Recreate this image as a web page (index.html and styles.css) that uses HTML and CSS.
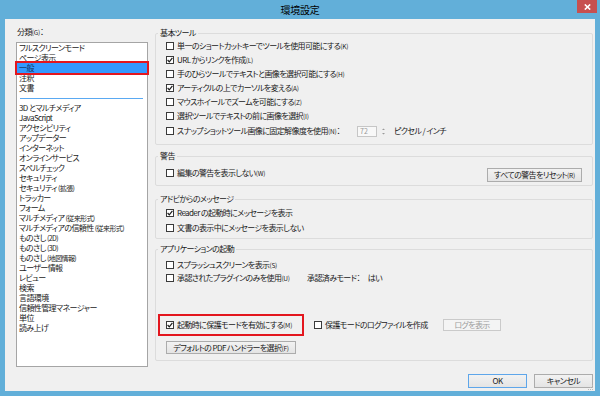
FILE: index.html
```html
<!DOCTYPE html>
<html lang="ja">
<head>
<meta charset="utf-8">
<title>環境設定</title>
<link rel="stylesheet" href="styles.css">
</head>
<body>
<div class="window">
  <div class="titlebar">
    <span class="title">環境設定</span>
    <span class="close"><svg width="7" height="6" viewBox="0 0 7 6"><path d="M0.8 0.4 L6.2 5.6 M6.2 0.4 L0.8 5.6" stroke="#fff" stroke-width="1.5"/></svg></span>
  </div>
  <div class="client">
    <div class="left">
      <div class="left-label">分類<span class="mn">(G)</span>：</div>
      <div class="list">
        <div class="item">フルスクリーンモード</div>
        <div class="item">ページ表示</div>
        <div class="item sel">一般</div>
        <div class="item">注釈</div>
        <div class="item">文書</div>
        <div class="sep"></div>
        <div class="item">3D とマルチメディア</div>
        <div class="item">JavaScript</div>
        <div class="item">アクセシビリティ</div>
        <div class="item">アップデーター</div>
        <div class="item">インターネット</div>
        <div class="item">オンラインサービス</div>
        <div class="item">スペルチェック</div>
        <div class="item">セキュリティ</div>
        <div class="item">セキュリティ <span class="sm">(拡張)</span></div>
        <div class="item">トラッカー</div>
        <div class="item">フォーム</div>
        <div class="item">マルチメディア <span class="sm">(従来形式)</span></div>
        <div class="item">マルチメディアの信頼性 <span class="sm">(従来形式)</span></div>
        <div class="item">ものさし <span class="sm">(2D)</span></div>
        <div class="item">ものさし <span class="sm">(3D)</span></div>
        <div class="item">ものさし <span class="sm">(地図情報)</span></div>
        <div class="item">ユーザー情報</div>
        <div class="item">レビュー</div>
        <div class="item">検索</div>
        <div class="item">言語環境</div>
        <div class="item">信頼性管理マネージャー</div>
        <div class="item">単位</div>
        <div class="item">読み上げ</div>
      </div>
    </div>

    <div class="right">
      <fieldset class="grp g1">
        <legend>基本ツール</legend>
        <div class="rows">
          <div class="cb"><span class="box"></span><span>単一のショートカットキーでツールを使用可能にする<span class="mn">(K)</span></span></div>
          <div class="cb"><span class="box"><svg width="6" height="6" viewBox="0 0 6 6"><path d="M0.6 3 L2.3 4.8 L5.4 0.9" stroke="#1a1a1a" stroke-width="1.2" fill="none"/></svg></span><span>URL からリンクを作成<span class="mn">(L)</span></span></div>
          <div class="cb"><span class="box"></span><span>手のひらツールでテキストと画像を選択可能にする<span class="mn">(H)</span></span></div>
          <div class="cb"><span class="box"><svg width="6" height="6" viewBox="0 0 6 6"><path d="M0.6 3 L2.3 4.8 L5.4 0.9" stroke="#1a1a1a" stroke-width="1.2" fill="none"/></svg></span><span>アーティクルの上でカーソルを変える<span class="mn">(A)</span></span></div>
          <div class="cb"><span class="box"></span><span>マウスホイールでズームを可能にする<span class="mn">(Z)</span></span></div>
          <div class="cb"><span class="box"></span><span>選択ツールでテキストの前に画像を選択<span class="mn">(I)</span></span></div>
          <div class="cb snap"><span class="box"></span><span class="snap-text">スナップショットツール画像に固定解像度を使用<span class="mn">(N)</span>：</span><span class="num">72</span><span class="spin"><svg width="7" height="11" viewBox="0 0 7 11"><path d="M2 4 L3.5 2.5 L5 4 Z M2 7 L3.5 8.5 L5 7 Z" fill="#9a9a9a"/></svg></span><span class="unit">ピクセル / インチ</span></div>
        </div>
      </fieldset>

      <fieldset class="grp g2">
        <legend>警告</legend>
        <div class="rows warn">
          <div class="cb"><span class="box"></span><span>編集の警告を表示しない<span class="mn">(W)</span></span></div>
          <span class="btn reset">すべての警告をリセット<span class="mn">(R)</span></span>
        </div>
      </fieldset>

      <fieldset class="grp g3">
        <legend>アドビからのメッセージ</legend>
        <div class="rows">
          <div class="cb"><span class="box"><svg width="6" height="6" viewBox="0 0 6 6"><path d="M0.6 3 L2.3 4.8 L5.4 0.9" stroke="#1a1a1a" stroke-width="1.2" fill="none"/></svg></span><span>Reader の起動時にメッセージを表示</span></div>
          <div class="cb"><span class="box"></span><span>文書の表示中にメッセージを表示しない</span></div>
        </div>
      </fieldset>

      <fieldset class="grp g4">
        <legend>アプリケーションの起動</legend>
        <div class="rows">
          <div class="cb"><span class="box"></span><span>スプラッシュスクリーンを表示<span class="mn">(S)</span></span></div>
          <div class="cb"><span class="box"></span><span class="plug-text">承認されたプラグインのみを使用<span class="mn">(U)</span></span><span>承認済みモード：</span><span class="yes">はい</span></div>
        </div>
        <div class="prot">
          <div class="redbox"><div class="cb"><span class="box"><svg width="6" height="6" viewBox="0 0 6 6"><path d="M0.6 3 L2.3 4.8 L5.4 0.9" stroke="#1a1a1a" stroke-width="1.2" fill="none"/></svg></span><span class="prot-text">起動時に保護モードを有効にする<span class="mn">(M)</span></span></div></div>
          <div class="cb log"><span class="box"></span><span>保護モードのログファイルを作成</span></div>
          <span class="btn disabled logbtn">ログを表示</span>
        </div>
        <span class="btn pdf">デフォルトの PDF ハンドラーを選択<span class="mn">(F)</span></span>
      </fieldset>

      <div class="actions">
        <span class="btn act default">OK</span>
        <span class="btn act">キャンセル</span>
      </div>
    </div>

    <svg class="grip" width="7" height="7" viewBox="0 0 7 7"><g fill="#b8b8b8"><rect x="5" y="1" width="1" height="1"/><rect x="3" y="3" width="1" height="1"/><rect x="5" y="3" width="1" height="1"/><rect x="1" y="5" width="1" height="1"/><rect x="3" y="5" width="1" height="1"/><rect x="5" y="5" width="1" height="1"/></g></svg>
  </div>
</div>
</body>
</html>
```

FILE: styles.css
```css
* { box-sizing: border-box; }
html, body { margin: 0; padding: 0; }
body {
  width: 600px;
  height: 396px;
  overflow: hidden;
  background: #62afd9;
  font-family: "Noto Sans CJK JP", "Noto Sans", sans-serif;
  font-size: 8px;
  line-height: 10px;
  letter-spacing: -0.6px;
  color: #1a1a1a;
  font-feature-settings: "palt";
}
.window { height: 396px; display: flex; flex-direction: column; }
.titlebar {
  height: 19px;
  flex: none;
  display: grid;
  grid-template-columns: 1fr auto 1fr;
}
.title { grid-column: 2; font-size: 10px; line-height: 20px; letter-spacing: -0.2px; color: #000; }
.close {
  grid-column: 3;
  justify-self: end;
  width: 20px;
  height: 13px;
  margin-right: 3px;
  background: #c75050;
  display: flex;
  align-items: center;
  justify-content: center;
}
.client {
  flex: none;
  height: 372px;
  margin: 0 5px;
  background: #f0f0f0;
  display: flex;
  gap: 7px;
  padding: 0 2px 0 11px;
  position: relative;
}
.mn { font-size: 6.5px; letter-spacing: -0.2px; }
.sm { font-size: 7px; }

/* left list */
.left { width: 132px; flex: none; display: flex; flex-direction: column; }
.left-label { margin-top: 8px; height: 10px; padding-left: 1px; }
.list {
  margin-top: 5px;
  height: 325px;
  border: 1px solid #a5a5a5;
  background: #fff;
}
.item { height: 10px; line-height: 10px; padding-left: 2px; white-space: nowrap; color: #1a1a1a; }
.item.sel { background: #3399ff; color: #10305c; outline: 2px solid #e3161e; }
.sep { height: 10px; display: flex; align-items: center; padding: 0 4px 0 3px; }
.sep::after { content: ""; flex: 1; height: 1px; background: #5aa9f2; }

/* right panel */
.right { flex: 1; min-width: 0; display: flex; flex-direction: column; padding-top: 9px; }
.grp {
  margin: 0;
  padding: 0 0 0 2px;
  border: 1px solid #dcdcdc;
  border-radius: 2px;
  min-width: 0;
}
.grp legend { padding: 0 2px; font-size: 8px; line-height: 10px; }
.rows { padding: 0 10px 0 8px; }
.cb { display: flex; align-items: center; height: 14px; white-space: nowrap; }
.box {
  width: 8px;
  height: 8px;
  flex: none;
  border: 1px solid #3a3a3a;
  background: #fff;
  margin-right: 3px;
  display: flex;
  align-items: center;
  justify-content: center;
}
.g1 .rows { padding-top: 1px; padding-bottom: 6px; }
.g1 .snap { margin-top: 1px; }
.snap-text { width: 180px; }
.num {
  width: 20px;
  height: 11px;
  border: 1px solid #c6c6c6;
  background: #f8f8f8;
  color: #9a9a9a;
  font-size: 7px;
  line-height: 9px;
  padding-left: 2px;
  letter-spacing: 0;
}
.spin { margin-left: 3px; height: 11px; display: flex; }
.unit { margin-left: 7px; }

.g2 { margin-top: 6px; }
.warn { display: flex; justify-content: space-between; align-items: flex-start; padding-top: 5px; padding-bottom: 3px; }
.btn {
  display: flex;
  align-items: center;
  justify-content: center;
  height: 14px;
  border: 1px solid #acacac;
  background: linear-gradient(#f2f2f2, #e4e4e4);
  white-space: nowrap;
  color: #1a1a1a;
}
.reset { width: 95px; margin-top: 2px; }

.g3 { margin-top: 8px; }
.g3 .rows { padding-top: 1px; padding-bottom: 3px; }
.g3 .cb { height: 15px; }

.g4 { margin-top: 5px; padding-bottom: 6px; }
.g4 .rows { padding-top: 4px; }
.g4 .rows .cb { height: 13px; }
.plug-text { width: 130px; }
.yes { margin-left: 8px; }
.prot { display: flex; align-items: center; margin-top: 30px; }
.redbox {
  height: 22px;
  border: 2px solid #e3161e;
  padding: 0 8px 0 6px;
  display: flex;
  align-items: center;
}
.prot-text { width: 117px; }
.log { margin-left: 10px; width: 129px; }
.logbtn { width: 58px; height: 12px; }
.btn.disabled { border-color: #cacaca; background: #f4f4f4; color: #9c9c9c; }
.pdf { width: 130px; height: 13px; margin: 5px 0 0 8px; }

.actions { display: flex; justify-content: flex-end; gap: 7px; margin-top: 13px; }
.act { width: 59px; height: 14px; }
.btn.default { border-color: #5ea6ea; }

.grip { position: absolute; right: 1px; bottom: 0; }
```
